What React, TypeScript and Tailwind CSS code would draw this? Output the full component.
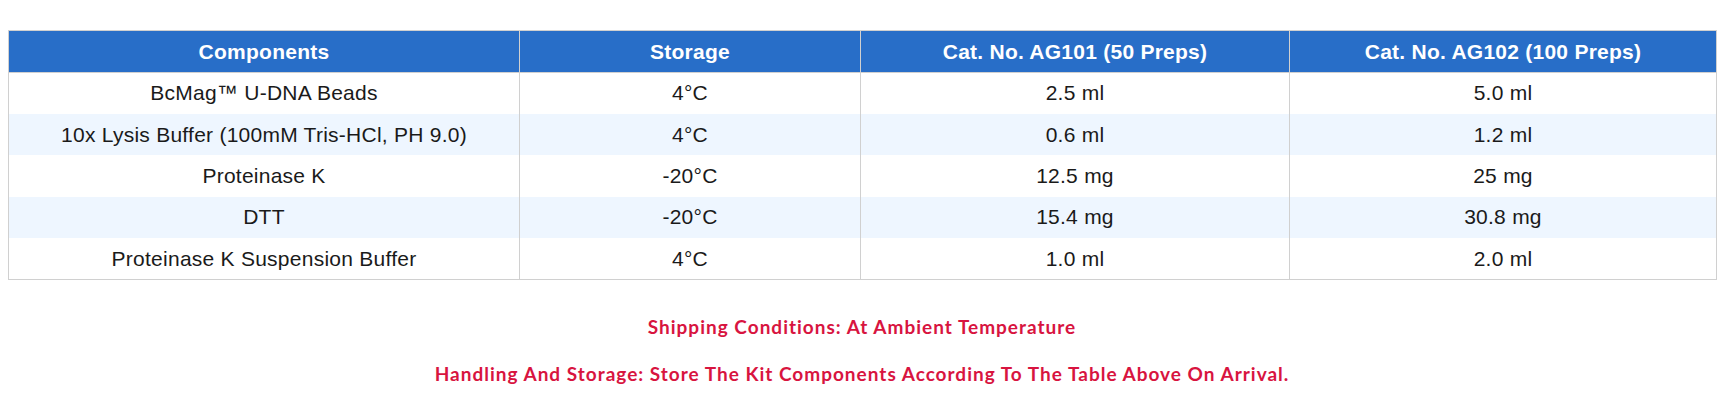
const rows = [
  ["BcMag™ U-DNA Beads", "4°C", "2.5 ml", "5.0 ml"],
  ["10x Lysis Buffer (100mM Tris-HCl, PH 9.0)", "4°C", "0.6 ml", "1.2 ml"],
  ["Proteinase K", "-20°C", "12.5 mg", "25 mg"],
  ["DTT", "-20°C", "15.4 mg", "30.8 mg"],
  ["Proteinase K Suspension Buffer", "4°C", "1.0 ml", "2.0 ml"],
];

const headers = [
  "Components",
  "Storage",
  "Cat. No. AG101 (50 Preps)",
  "Cat. No. AG102 (100 Preps)",
];

export default function App() {
  return (
    <div className="w-[1724px] h-[419px] bg-white pt-[30px] px-2">
      <table className="w-full table-fixed border-collapse border border-[#d0d0d0] font-['Liberation_Sans',Arial,sans-serif] text-[21px] tracking-[0.25px]">
        <colgroup>
          <col className="w-[511px]" />
          <col className="w-[341px]" />
          <col className="w-[429px]" />
          <col className="w-[427px]" />
        </colgroup>
        <thead>
          <tr className="bg-[#286ec8] h-[42px]">
            {headers.map((h) => (
              <th
                key={h}
                className="border border-[#d0d0d0] text-white font-bold text-center px-3 leading-[24px]"
              >
                {h}
              </th>
            ))}
          </tr>
        </thead>
        <tbody>
          {rows.map((r, i) => (
            <tr
              key={i}
              className={i % 2 === 1 ? "bg-[#eef6ff] h-[41.4px]" : "bg-white h-[41.4px]"}
            >
              {r.map((c, j) => (
                <td
                  key={j}
                  className="border-x border-[#d0d0d0] text-center text-[#1a1a1a] px-3 leading-[24px]"
                >
                  {c}
                </td>
              ))}
            </tr>
          ))}
        </tbody>
      </table>

      <div className="mt-[34px] flex flex-col items-center gap-[22px] font-['Lato',sans-serif] font-bold text-[19px] tracking-[1px] text-[#d8143f] leading-[25px]">
        <p>Shipping Conditions: At Ambient Temperature</p>
        <p>Handling And Storage: Store The Kit Components According To The Table Above On Arrival.</p>
      </div>
    </div>
  );
}
